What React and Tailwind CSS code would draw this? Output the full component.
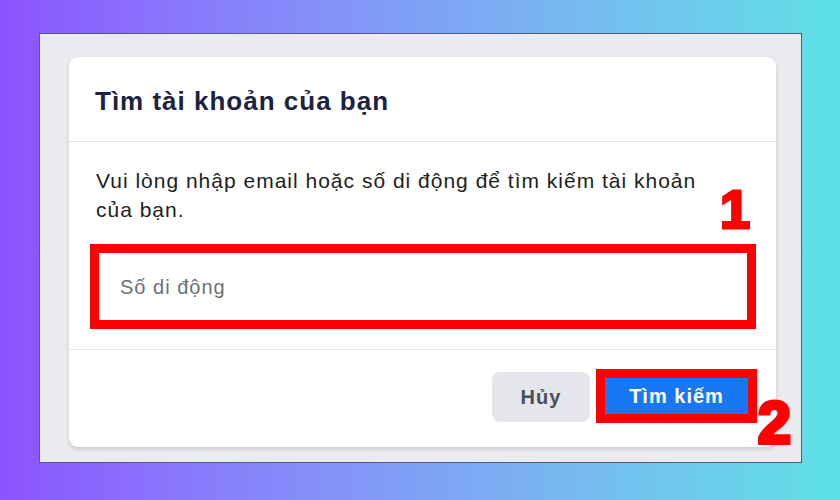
export default function App() {
  return (
    <div
      className="relative w-[840px] h-[500px] overflow-hidden bg-gradient-to-r from-[#8c52ff] to-[#5ce1e6] pt-[33px] pl-[39px]"
      style={{ fontFamily: '"Liberation Sans", Arial, Helvetica, sans-serif' }}
    >
      <div className="w-[763px] h-[430px] bg-[#e9ebee] border border-[#5a5680] pt-[23px] pl-[29px]">
        <div className="w-[707px] h-[390px] bg-white rounded-[9px] shadow-[0_2px_4px_rgba(0,0,0,0.15)] flex flex-col">
          <div className="h-[85px] shrink-0 flex items-center pl-[26px] pt-[4px] border-b border-[#dfe1e4]">
            <h1 className="text-[26px] tracking-[1px] font-bold text-[#1c2340] leading-none">Tìm tài khoản của bạn</h1>
          </div>
          <div className="pl-[21px] pr-[20px] pt-[24px] pb-[20px] border-b border-[#e4e6e9]">
            <p className="pl-[6px] pr-[20px] text-[21px] tracking-[1px] leading-[29px] text-[#1c1e21]">
              Vui lòng nhập email hoặc số di động để tìm kiếm tài khoản của bạn.
            </p>
            <div className="mt-[20px] h-[85px] border-[9px] border-[#ff0000] bg-white flex items-center pl-[21px]">
              <span className="text-[20px] tracking-[1px] text-[#6b6f76]">Số di động</span>
            </div>
          </div>
          <div className="flex justify-end items-start gap-[6px] pt-[19px] pr-[19px]">
            <button className="mt-[3px] w-[98px] h-[50px] rounded-[8px] bg-[#e4e6eb] text-[20px] tracking-[1px] font-bold text-[#4b4f56]">
              Hủy
            </button>
            <div className="w-[161px] h-[54px] border-[9px] border-[#ff0000] bg-[#1877f2] flex items-center justify-center">
              <span className="text-[20px] tracking-[1px] font-bold text-white">Tìm kiếm</span>
            </div>
          </div>
        </div>
      </div>
      <span className="absolute left-[720px] top-[182px] text-[54px] font-bold leading-none text-[#ff0000] [-webkit-text-stroke:3px_#ff0000]">
        1
      </span>
      <span className="absolute left-[758px] top-[394px] text-[59px] font-bold leading-none text-[#ff0000] [-webkit-text-stroke:4px_#ff0000]">
        2
      </span>
    </div>
  );
}
